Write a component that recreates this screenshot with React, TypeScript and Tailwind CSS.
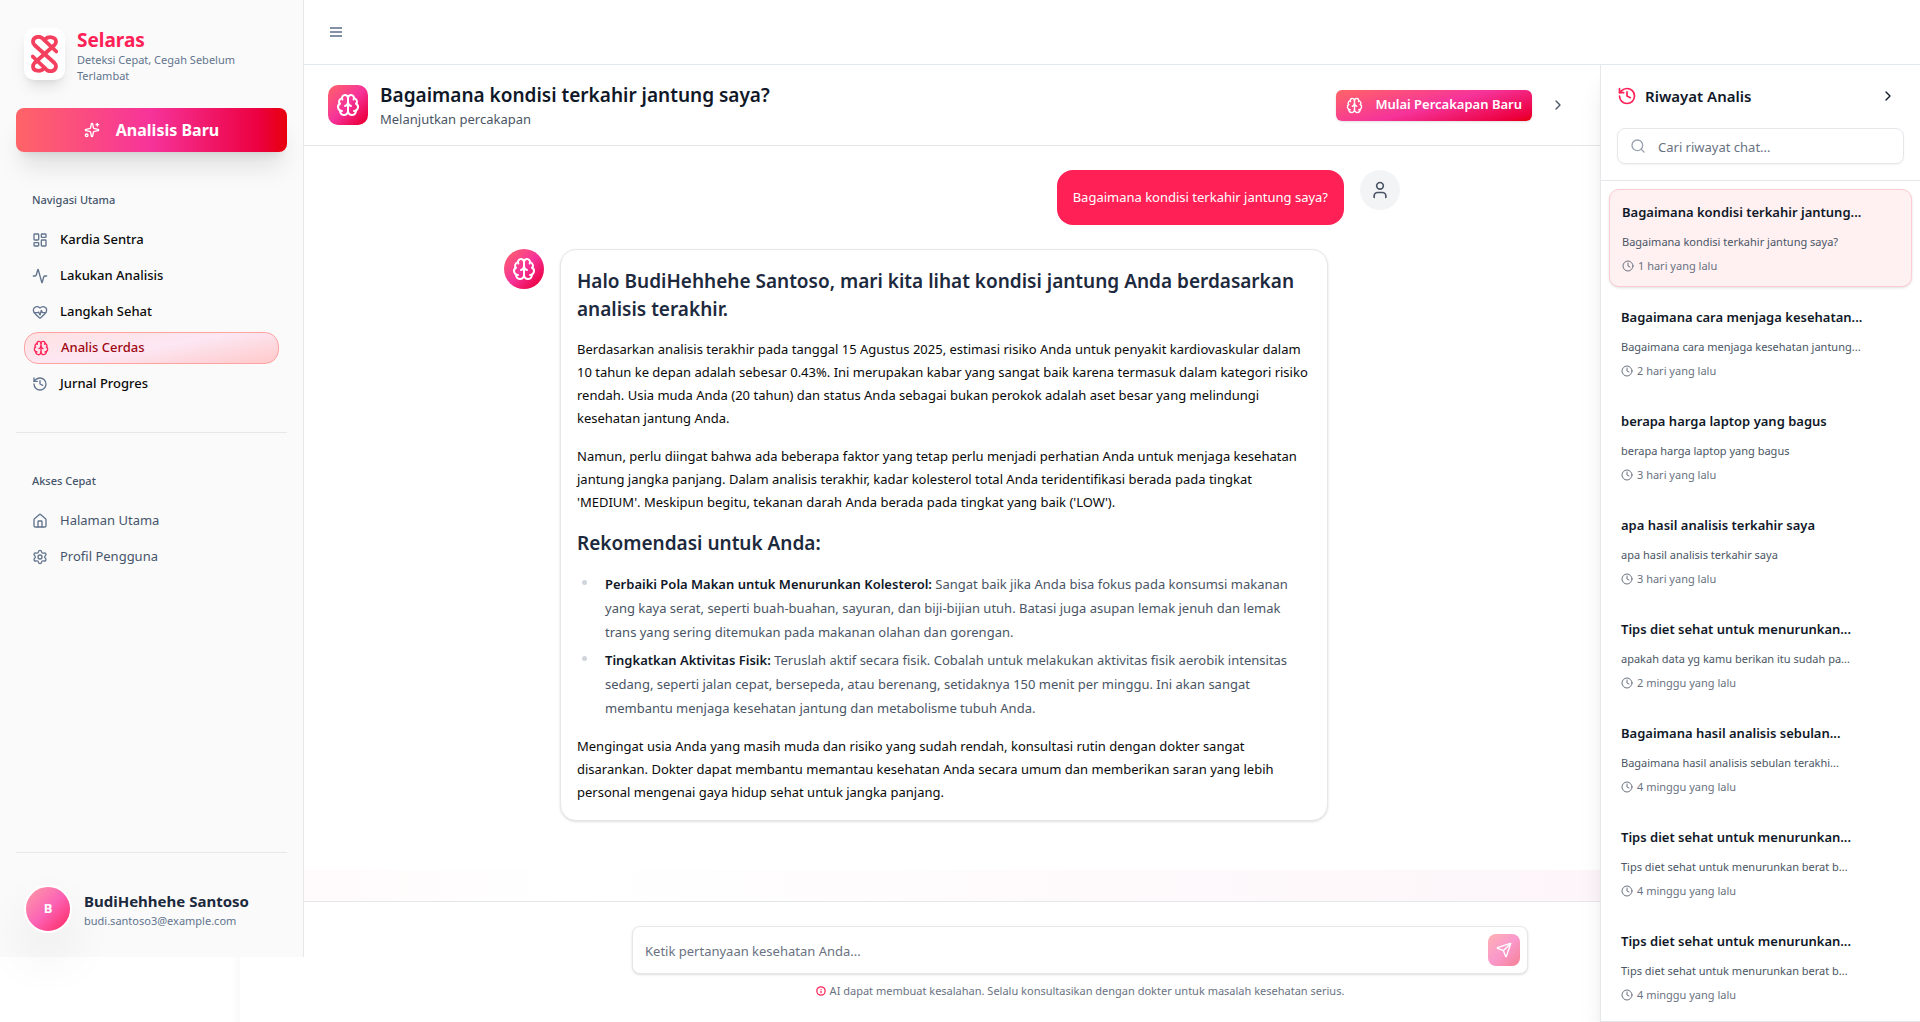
import React from "react";
import {
  Activity,
  Brain,
  ChevronRight,
  Clock,
  HeartPulse,
  History,
  House,
  Info,
  LayoutDashboard,
  Search,
  Send,
  Settings,
  Sparkles,
  User,
  type LucideIcon,
} from "lucide-react";

type NavItem = { label: string; icon: LucideIcon; active?: boolean };

const mainNav: NavItem[] = [
  { label: "Kardia Sentra", icon: LayoutDashboard },
  { label: "Lakukan Analisis", icon: Activity },
  { label: "Langkah Sehat", icon: HeartPulse },
  { label: "Analis Cerdas", icon: Brain, active: true },
  { label: "Jurnal Progres", icon: History },
];

const quickNav: NavItem[] = [
  { label: "Halaman Utama", icon: House },
  { label: "Profil Pengguna", icon: Settings },
];

const history = [
  { title: "Bagaimana kondisi terkahir jantung...", preview: "Bagaimana kondisi terkahir jantung saya?", time: "1 hari yang lalu", active: true },
  { title: "Bagaimana cara menjaga kesehatan...", preview: "Bagaimana cara menjaga kesehatan jantung...", time: "2 hari yang lalu" },
  { title: "berapa harga laptop yang bagus", preview: "berapa harga laptop yang bagus", time: "3 hari yang lalu" },
  { title: "apa hasil analisis terkahir saya", preview: "apa hasil analisis terkahir saya", time: "3 hari yang lalu" },
  { title: "Tips diet sehat untuk menurunkan...", preview: "apakah data yg kamu berikan itu sudah pa...", time: "2 minggu yang lalu" },
  { title: "Bagaimana hasil analisis sebulan...", preview: "Bagaimana hasil analisis sebulan terakhi...", time: "4 minggu yang lalu" },
  { title: "Tips diet sehat untuk menurunkan...", preview: "Tips diet sehat untuk menurunkan berat b...", time: "4 minggu yang lalu" },
  { title: "Tips diet sehat untuk menurunkan...", preview: "Tips diet sehat untuk menurunkan berat b...", time: "4 minggu yang lalu" },
];

const recommendations = [
  {
    title: "Perbaiki Pola Makan untuk Menurunkan Kolesterol:",
    text: "Sangat baik jika Anda bisa fokus pada konsumsi makanan yang kaya serat, seperti buah-buahan, sayuran, dan biji-bijian utuh. Batasi juga asupan lemak jenuh dan lemak trans yang sering ditemukan pada makanan olahan dan gorengan.",
  },
  {
    title: "Tingkatkan Aktivitas Fisik:",
    text: "Teruslah aktif secara fisik. Cobalah untuk melakukan aktivitas fisik aerobik intensitas sedang, seperti jalan cepat, bersepeda, atau berenang, setidaknya 150 menit per minggu. Ini akan sangat membantu menjaga kesehatan jantung dan metabolisme tubuh Anda.",
  },
];

function Logo() {
  return (
    <svg viewBox="0 0 27 38" className="h-[38px] w-[27px]" fill="none" stroke="#f43f5e" strokeWidth="3.8" strokeLinecap="round" aria-hidden="true">
      <path d="M25.3 16.5 11.5 3.3C8 .3 2 2 2 6.8c0 1.4.5 2.2 1.5 3.2l20 18c1 1 1.5 1.800 1.500 3.200 0 4.800-6 6.500-9.500 3.500L1.700 21.500" />
      <path d="M13.500 5C17 .8 25 1.300 25 6.800c0 1.400-.5 2.200-1.500 3.200l-20 18c-1 1-1.500 1.800-1.500 3.200C2 36.700 10 37.200 13.500 33" />
    </svg>
  );
}

function NavLink({ label, icon: Icon, active, muted }: NavItem & { muted?: boolean }) {
  if (active) {
    return (
      <a href="#" aria-current="page" className="flex h-8 items-center gap-3 rounded-[14px] border border-red-300 bg-[linear-gradient(170deg,#ffe2e2,#fce7f3_50%,#ffc9c9)] px-2 text-[13px] font-medium text-red-800">
        <Icon size={16} className="text-[#ff2056]" />
        {label}
      </a>
    );
  }
  return (
    <a href="#" className={`flex h-8 items-center gap-3 rounded-[14px] px-2 text-[13px] ${muted ? "text-slate-600" : "font-medium text-neutral-950"}`}>
      <Icon size={16} className="text-slate-500" />
      {label}
    </a>
  );
}

function Sidebar() {
  return (
    <aside className="z-20 flex h-[calc(100%-65px)] w-[304px] shrink-0 flex-col border-r border-gray-200 bg-[#fafafa] px-4">
      <div className="flex h-[108px] items-start gap-3 px-2 pt-7">
        <div className="flex h-[52px] w-[41px] items-center justify-center rounded-[10px] bg-white shadow-lg">
          <Logo />
        </div>
        <div className="flex-1">
          <p className="text-[19px] leading-6 font-bold text-[#ff2056]">Selaras</p>
          <p className="text-[11px] leading-4 text-slate-500">Deteksi Cepat, Cegah Sebelum Terlambat</p>
        </div>
      </div>
      <button className="flex h-11 shrink-0 items-center justify-center gap-4 rounded-lg bg-[linear-gradient(90deg,#ff6467,#f6339a_50%,#ec003f_90%,#e7000b)] text-[16px] font-bold text-white shadow-xl">
        <Sparkles size={16} />
        Analisis Baru
      </button>
      <nav aria-label="Navigasi Utama" className="px-2 pt-8">
        <h2 className="flex h-8 items-center px-2 text-[11px] font-medium text-slate-600">Navigasi Utama</h2>
        <div className="mt-2 flex flex-col gap-1">
          {mainNav.map((item) => (
            <NavLink key={item.label} {...item} />
          ))}
        </div>
      </nav>
      <hr className="mt-8 border-gray-200" />
      <nav aria-label="Akses Cepat" className="px-2 pt-8">
        <h2 className="flex h-8 items-center px-2 text-[11px] font-medium text-slate-600">Akses Cepat</h2>
        <div className="mt-2 flex flex-col gap-1">
          {quickNav.map((item) => (
            <NavLink key={item.label} {...item} muted />
          ))}
        </div>
      </nav>
      <div className="mt-auto flex h-[105px] items-center gap-3 border-t border-gray-200 px-2 pt-2">
        <div className="flex size-12 items-center justify-center rounded-full border-2 border-white bg-[linear-gradient(135deg,#ffa2a2,#fb64b6_50%,#ff2056)] bg-origin-border text-[13px] font-bold text-white shadow-[0_25px_50px_rgba(0,0,0,0.08)]">
          B
        </div>
        <div className="pt-1">
          <p className="text-[15px] leading-5 font-bold text-slate-800">BudiHehhehe Santoso</p>
          <p className="text-[11px] leading-5 text-slate-500">budi.santoso3@example.com</p>
        </div>
      </div>
    </aside>
  );
}

function ChatHeader() {
  return (
    <header className="flex h-[81px] shrink-0 items-center justify-between border-b border-gray-200 pr-7 pl-6">
      <div className="flex items-center gap-3">
        <div className="flex size-10 items-center justify-center rounded-[10px] bg-[linear-gradient(135deg,#ff6467,#f6339a_50%,#ec003f_90%,#e7000b)] text-white">
          <Brain size={24} />
        </div>
        <div>
          <h1 className="text-[19px] leading-7 font-semibold text-gray-900">Bagaimana kondisi terkahir jantung saya?</h1>
          <p className="text-[13px] leading-5 text-gray-600">Melanjutkan percakapan</p>
        </div>
      </div>
      <div className="flex items-center gap-3">
        <button className="flex h-[31px] items-center gap-3 rounded-md bg-[linear-gradient(165deg,#ff6467,#f6339a_50%,#ec003f_90%,#e7000b)] px-[10px] text-[13px] font-semibold text-white shadow-sm">
          <Brain size={17} />
          Mulai Percakapan Baru
        </button>
        <button aria-label="Tutup riwayat" className="flex size-7 items-center justify-center text-gray-600">
          <ChevronRight size={16} />
        </button>
      </div>
    </header>
  );
}

function Messages() {
  return (
    <div className="min-h-0 flex-1 overflow-hidden bg-white">
      <div className="mx-auto flex max-w-4xl flex-col gap-6 pt-6">
        <div className="flex justify-end gap-4">
          <p className="rounded-2xl bg-[#ff2056] p-4 text-[13px] leading-[23px] text-white">Bagaimana kondisi terkahir jantung saya?</p>
          <div className="flex size-10 items-center justify-center rounded-full bg-gray-100 text-gray-600">
            <User size={20} />
          </div>
        </div>
        <div className="flex gap-4">
          <div className="flex size-10 shrink-0 items-center justify-center rounded-full bg-[linear-gradient(135deg,#ff6467,#f6339a_50%,#ec003f_90%,#e7000b)] text-white">
            <Brain size={24} />
          </div>
          <article className="flex max-w-3xl flex-1 flex-col gap-[15px] rounded-2xl border border-gray-200 bg-white px-4 pt-[17px] pb-4 text-[13px] leading-[23px] text-neutral-950 shadow-sm">
            <h2 className="text-[19px] leading-7 font-semibold text-slate-800">
              Halo BudiHehhehe Santoso, mari kita lihat kondisi jantung Anda berdasarkan analisis terakhir.
            </h2>
            <p>
              Berdasarkan analisis terakhir pada tanggal 15 Agustus 2025, estimasi risiko Anda untuk penyakit kardiovaskular dalam 10 tahun ke depan adalah sebesar 0.43%. Ini merupakan kabar yang sangat baik karena termasuk dalam kategori risiko rendah. Usia muda Anda (20 tahun) dan status Anda sebagai bukan perokok adalah aset besar yang melindungi kesehatan jantung Anda.
            </p>
            <p>
              Namun, perlu diingat bahwa ada beberapa faktor yang tetap perlu menjadi perhatian Anda untuk menjaga kesehatan jantung jangka panjang. Dalam analisis terakhir, kadar kolesterol total Anda teridentifikasi berada pada tingkat 'MEDIUM'. Meskipun begitu, tekanan darah Anda berada pada tingkat yang baik ('LOW').
            </p>
            <h2 className="text-[19px] leading-7 font-semibold text-slate-800">Rekomendasi untuk Anda:</h2>
            <ul className="flex flex-col gap-1 leading-6 text-gray-600">
              {recommendations.map((item) => (
                <li key={item.title} className="flex gap-[18px] pl-[5px]">
                  <span className="mt-2 size-[5px] shrink-0 rounded-full bg-gray-300" />
                  <p>
                    <strong className="font-semibold text-gray-900">{item.title}</strong> {item.text}
                  </p>
                </li>
              ))}
            </ul>
            <p>
              Mengingat usia Anda yang masih muda dan risiko yang sudah rendah, konsultasi rutin dengan dokter sangat disarankan. Dokter dapat membantu memantau kesehatan Anda secara umum dan memberikan saran yang lebih personal mengenai gaya hidup sehat untuk jangka panjang.
            </p>
          </article>
        </div>
      </div>
    </div>
  );
}

function Composer() {
  return (
    <footer className="absolute right-0 bottom-0 left-60 h-[121px] border-t border-gray-200 bg-white px-4 pt-6 shadow-[-10px_16px_10px_-8px_rgba(0,0,0,0.04)]">
      <form className="mx-auto max-w-4xl" onSubmit={(e) => e.preventDefault()}>
        <div className="flex h-12 items-center rounded-lg border border-gray-200 bg-white pr-[7px] pl-3 shadow-sm">
          <input aria-label="Pertanyaan kesehatan" placeholder="Ketik pertanyaan kesehatan Anda..." className="h-full flex-1 pt-[2px] text-[13px] outline-none placeholder:text-gray-500" />
          <button aria-label="Kirim" className="flex size-8 items-center justify-center rounded-lg bg-[linear-gradient(135deg,#ffb1b3,#fa99cc_50%,#f58095)] text-white">
            <Send size={16} />
          </button>
        </div>
        <p className="mt-[9px] flex items-center justify-center gap-1 text-[11px] leading-4 text-gray-500">
          <Info size={10} strokeWidth={3} className="text-[#ff2056]" />
          AI dapat membuat kesalahan. Selalu konsultasikan dengan dokter untuk masalah kesehatan serius.
        </p>
      </form>
    </footer>
  );
}

function HistoryPanel() {
  return (
    <aside className="z-10 flex w-80 shrink-0 flex-col border-b border-l border-gray-200 bg-white shadow-xl">
      <div className="h-[116px] shrink-0 border-b border-gray-200 px-4 pt-[15px]">
        <div className="flex h-8 items-center gap-2">
          <History size={20} className="text-[#ff2056]" />
          <h2 className="flex-1 text-[15px] font-semibold text-gray-900">Riwayat Analis</h2>
          <button aria-label="Ciutkan riwayat" className="flex size-8 items-center justify-center text-gray-900">
            <ChevronRight size={16} />
          </button>
        </div>
        <label className="mt-4 flex h-9 items-center gap-3 rounded-lg border border-gray-200 px-3 shadow-xs">
          <Search size={16} className="text-gray-400" />
          <input placeholder="Cari riwayat chat..." aria-label="Cari riwayat chat" className="h-full min-w-0 flex-1 pt-[2px] text-[13px] outline-none placeholder:text-gray-500" />
        </label>
      </div>
      <ul className="flex min-h-0 flex-1 flex-col gap-2 overflow-hidden p-2">
        {history.map((item, i) => (
          <li key={i}>
            <button className={`w-full rounded-[10px] p-3 text-left ${item.active ? "border border-[#ffccd3] bg-[#fff0f1] shadow-sm" : ""}`}>
              <span className="block text-[13px] leading-5 font-semibold text-gray-900">{item.title}</span>
              <span className="mt-3 block text-[11px] leading-4 text-gray-600">{item.preview}</span>
              <span className="mt-2 flex items-center gap-1 text-[11px] leading-4 text-gray-500">
                <Clock size={12} />
                {item.time}
              </span>
            </button>
          </li>
        ))}
      </ul>
    </aside>
  );
}

export default function App() {
  return (
    <div className="relative flex h-screen overflow-hidden bg-white font-['Segoe_UI','Noto_Sans',sans-serif]">
      <Sidebar />
      <div className="flex min-w-0 flex-1 flex-col">
        <div className="flex h-[65px] shrink-0 items-center border-b border-slate-200 px-6">
          <button aria-label="Buka menu" className="flex size-4 items-center justify-center text-[#8490a5]">
            <svg viewBox="0 0 12 10" className="h-[10px] w-3" fill="currentColor" aria-hidden="true">
              <path d="M0 0h12v2H0zM0 4h12v2H0zM0 8h12v2H0z" />
            </svg>
          </button>
        </div>
        <div className="flex min-h-0 flex-1">
          <main className="flex min-w-0 flex-1 flex-col">
            <ChatHeader />
            <Messages />
            <div className="mb-[121px] h-[31px] shrink-0 bg-[linear-gradient(90deg,#fffafb,#ffffff_20%,#fdf5f9)]" />
          </main>
          <HistoryPanel />
        </div>
      </div>
      <Composer />
    </div>
  );
}
